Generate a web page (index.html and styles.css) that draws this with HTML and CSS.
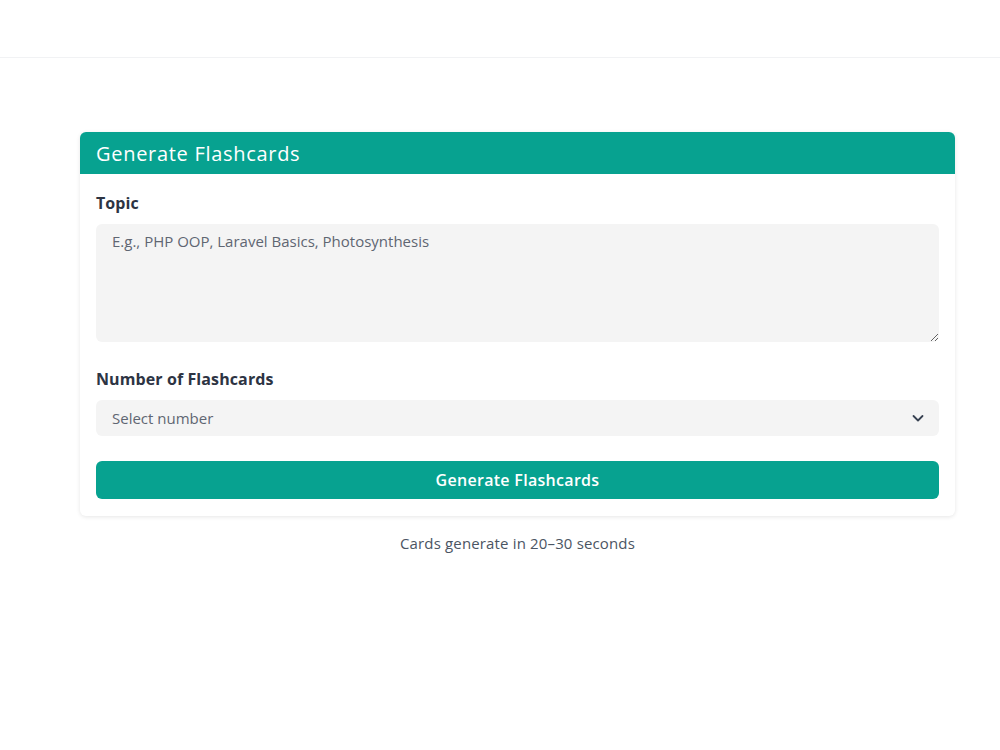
FILE: index.html
```html
<!DOCTYPE html>
<html lang="en">
<head>
<meta charset="utf-8">
<title>Generate Flashcards</title>
<link rel="stylesheet" href="styles.css">
</head>
<body>
<header class="topbar"></header>
<main class="main">
  <section class="card">
    <div class="card-head">Generate Flashcards</div>
    <form class="card-body">
      <label class="label" for="topic">Topic</label>
      <textarea id="topic" class="textarea" placeholder="E.g., PHP OOP, Laravel Basics, Photosynthesis"></textarea>
      <label class="label label-gap" for="count">Number of Flashcards</label>
      <div class="select">
        <span class="select-text">Select number</span>
        <svg class="chev" width="14" height="14" viewBox="0 0 14 14"><path d="M2.5 5l4.5 4.5L11.5 5" fill="none" stroke="#374151" stroke-width="1.8" stroke-linecap="round" stroke-linejoin="round"/></svg>
      </div>
      <button type="button" class="btn">Generate Flashcards</button>
    </form>
  </section>
  <p class="note">Cards generate in 20–30 seconds</p>
</main>
</body>
</html>
```
FILE: styles.css
```css
* { box-sizing: border-box; }
html, body { margin: 0; padding: 0; background: #fff; }
body { font-family: "Open Sans", "Noto Sans", sans-serif; color: #2d3748; }
.topbar { height: 58px; border-bottom: 1px solid #f1f2f4; background: #fff; }
.main { padding: 74px 45px 0 80px; }
.card { background: #fff; border-radius: 6px; box-shadow: 0 1px 4px rgba(0,0,0,0.10); overflow: hidden; }
.card-head { background: #07a290; color: #fff; height: 42px; padding: 0 16px; display: flex; align-items: center; font-size: 20px; font-weight: 500; letter-spacing: 0.7px; }
.card-body { padding: 17px 16px 17px; display: flex; flex-direction: column; }
.label { font-size: 16px; font-weight: 700; color: #2d3443; line-height: 24px; letter-spacing: 0.1px; }
.label-gap { margin-top: 25px; }
.textarea { margin-top: 9px; height: 118px; border: none; border-radius: 6px; background: #f4f4f4; padding: 7px 16px; font-family: inherit; font-size: 15px; line-height: 20px; color: #374151; resize: vertical; outline: none; }
.textarea::placeholder { color: #5f6672; }
.select { margin-top: 9px; height: 36px; border-radius: 6px; background: #f4f4f4; display: flex; align-items: center; justify-content: space-between; padding: 0 14px 0 16px; }
.select-text { font-size: 15px; color: #5f6672; }
.btn { margin-top: 25px; height: 38px; border: none; border-radius: 6px; background: #07a290; color: #fff; font-family: inherit; font-size: 16px; font-weight: 600; letter-spacing: 0.3px; }
.note { text-align: center; margin: 17px 0 0; font-size: 15px; line-height: 20px; color: #4b5563; letter-spacing: 0.15px; }
```
